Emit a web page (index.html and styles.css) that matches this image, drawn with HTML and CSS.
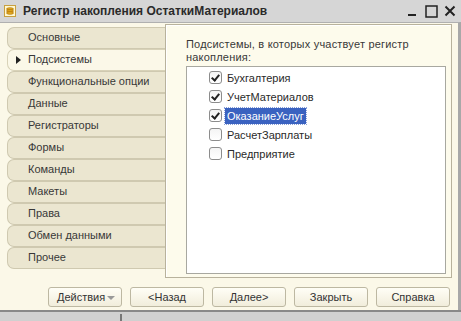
FILE: index.html
```html
<!DOCTYPE html>
<html>
<head>
<meta charset="utf-8">
<link rel="stylesheet" href="styles.css">
</head>
<body>
<div class="window">
  <div class="titlebar">
    <svg class="appicon" width="12" height="12" viewBox="0 0 12 12">
      <rect x="0.5" y="0.5" width="11" height="11" fill="#fff8d0" stroke="#c8a040"/>
      <ellipse cx="6" cy="4" rx="3.5" ry="1.3" fill="#e8b020" stroke="#a06000" stroke-width="0.6"/>
      <ellipse cx="6" cy="6" rx="3.5" ry="1.3" fill="#e8b020" stroke="#a06000" stroke-width="0.6"/>
      <ellipse cx="6" cy="8" rx="3.5" ry="1.3" fill="#e8b020" stroke="#a06000" stroke-width="0.6"/>
    </svg>
    <span class="title">Регистр накопления ОстаткиМатериалов</span>
    <div class="controls">
      <svg width="12" height="12" viewBox="0 0 12 12"><rect x="1" y="9" width="8" height="2" fill="#222"/></svg>
      <svg width="13" height="13" viewBox="0 0 13 13"><rect x="1" y="1" width="11" height="11" fill="none" stroke="#222" stroke-width="1.5"/></svg>
      <svg width="12" height="12" viewBox="0 0 12 12"><path d="M1.5 1.5 L10.5 10.5 M10.5 1.5 L1.5 10.5" stroke="#222" stroke-width="2"/></svg>
    </div>
  </div>
  <div class="body">
    <div class="main">
      <ul class="tabs">
        <li class="tab">Основные</li>
        <li class="tab active"><span class="arrow"></span>Подсистемы</li>
        <li class="tab">Функциональные опции</li>
        <li class="tab">Данные</li>
        <li class="tab">Регистраторы</li>
        <li class="tab">Формы</li>
        <li class="tab">Команды</li>
        <li class="tab">Макеты</li>
        <li class="tab">Права</li>
        <li class="tab">Обмен данными</li>
        <li class="tab">Прочее</li>
      </ul>
      <div class="panel">
        <div class="label">Подсистемы, в которых участвует регистр накопления:</div>
        <div class="list">
          <div class="item"><span class="cb checked"></span><span class="txt">Бухгалтерия</span></div>
          <div class="item"><span class="cb checked"></span><span class="txt">УчетМатериалов</span></div>
          <div class="item"><span class="cb checked"></span><span class="txt selected">ОказаниеУслуг</span></div>
          <div class="item"><span class="cb"></span><span class="txt">РасчетЗарплаты</span></div>
          <div class="item"><span class="cb"></span><span class="txt">Предприятие</span></div>
        </div>
      </div>
    </div>
    <div class="buttons">
      <button class="btn menu">Действия<span class="dd"></span></button>
      <button class="btn">&lt;Назад</button>
      <button class="btn">Далее&gt;</button>
      <button class="btn">Закрыть</button>
      <button class="btn">Справка</button>
    </div>
  </div>
  <div class="bottom"><span class="mark"></span></div>
</div>
</body>
</html>
```
FILE: styles.css
```css
* { box-sizing: border-box; }
html, body { margin: 0; padding: 0; }
body {
  width: 461px;
  height: 321px;
  overflow: hidden;
  font-family: "Liberation Sans", Arial, sans-serif;
  font-size: 11px;
  color: #333;
  background: #d4d4d4;
}
.window {
  width: 461px;
  height: 321px;
  display: flex;
  flex-direction: column;
}
.titlebar {
  height: 22px;
  flex: none;
  background: #d6d6d6;
  display: flex;
  align-items: center;
  padding-left: 4px;
}
.appicon { flex: none; margin-top: -1px; }
.title {
  font-weight: bold;
  font-size: 12px;
  color: #2a2a2a;
  margin-left: 7px;
}
.controls {
  margin-left: auto;
  display: flex;
  gap: 6px;
  align-items: center;
  padding-right: 5px;
}
.body {
  height: 288px;
  flex: none;
  background: #fbf8e8;
  border-top: 1px solid #b0b0b0;
  border-right: 3px solid #a8a8a8;
  display: flex;
  flex-direction: column;
}
.main {
  display: flex;
  padding: 1px 6px 0 7px;
  height: 255px;
}
.tabs {
  list-style: none;
  margin: 0;
  padding: 3px 0 0 0;
  width: 158px;
  flex: none;
}
.tab {
  height: 22px;
  line-height: 19px;
  padding-left: 20px;
  background: #ebe6d0;
  border: 1px solid #cfc9b0;
  border-right: none;
  border-radius: 7px 0 0 7px;
  position: relative;
  color: #383838;
}
.tab.active {
  background: #fbf8e8;
  border-color: #d8d2b8;
}
.arrow {
  position: absolute;
  left: 8px;
  top: 6px;
  width: 0; height: 0;
  border-left: 5px solid #222;
  border-top: 4px solid transparent;
  border-bottom: 4px solid transparent;
}
.panel {
  flex: 1;
  border: 1px solid #b8b29c;
  background: #fdfbec;
  padding: 13px 5px 3px 20px;
  display: flex;
  flex-direction: column;
  box-shadow: inset 1px 1px 0 #fff;
}
.label {
  line-height: 13px;
  color: #383838;
  width: 240px;
  letter-spacing: 0.2px;
}
.list {
  flex: 1;
  margin-top: 2px;
  background: #fff;
  border: 1px solid #a8a8a0;
  padding: 1px 0 0 22px;
}
.item {
  height: 19px;
  display: flex;
  align-items: center;
}
.cb {
  width: 13px;
  height: 13px;
  border: 1px solid #8c8c8c;
  border-radius: 3px;
  background: linear-gradient(#f4f4f4, #ffffff);
  margin-right: 3px;
  position: relative;
  flex: none;
}
.cb.checked::after {
  content: "";
  position: absolute;
  left: 3px;
  top: 1px;
  width: 3px;
  height: 6px;
  border-right: 2px solid #222;
  border-bottom: 2px solid #222;
  transform: rotate(40deg);
}
.txt {
  padding: 1px 2px;
  line-height: 14px;
  color: #2a2a2a;
}
.txt.selected {
  background: #3a62c0;
  color: #fff;
  outline: 1px dotted #8aa0d8;
}
.buttons {
  display: flex;
  gap: 8px;
  padding: 9px 0 0 48px;
}
.btn {
  width: 74px;
  height: 20px;
  font-family: inherit;
  font-size: 11px;
  color: #333;
  background: linear-gradient(#fffef6, #f1eddb);
  border: 1px solid #bdb8a2;
  border-radius: 3px;
  padding: 0;
  position: relative;
}
.btn.menu {
  text-align: left;
  padding-left: 8px;
}
.dd {
  position: absolute;
  right: 6px;
  top: 8px;
  width: 0; height: 0;
  border-top: 4px solid #999;
  border-left: 4px solid transparent;
  border-right: 4px solid transparent;
}
.bottom {
  flex: 1;
  background: #d0d0d0;
  border-top: 2px solid #888;
  position: relative;
}
.mark {
  position: absolute;
  left: 120px;
  top: 2px;
  width: 2px;
  height: 8px;
  background: #777;
}
```
